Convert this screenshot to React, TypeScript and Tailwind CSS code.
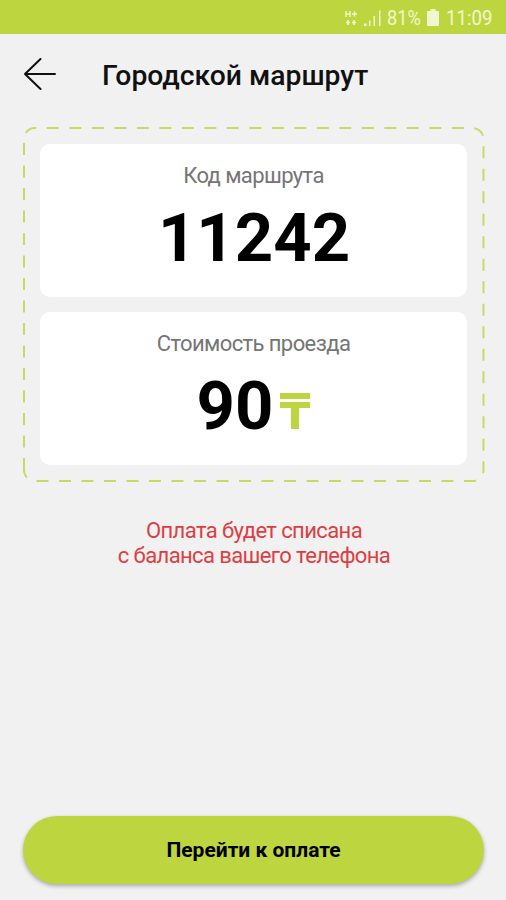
import type { ReactNode } from 'react';

/**
 * Android status bar with signal, battery and clock
 */
function StatusBar() {
  return (
    <div className="flex h-[34px] items-center justify-end bg-[#bdd63f] pt-[2px] pr-[15px] text-[#f1f6d0]">
      <svg className="mr-[7px] h-[18px] w-[14px]" viewBox="0 0 14 18" fill="none" stroke="currentColor" strokeWidth="1.5">
        <path d="M3 2v6M7 2v6M3 5h4M9 5h5M11.500 2.500v5" />
        <path d="M5 11v5M3 13.500h4M11 11v5M9 13.500h4" strokeWidth="1.6" />
      </svg>
      <svg className="mr-[6px] h-[18px] w-[17px]" viewBox="0 0 17 18" fill="currentColor">
        <path d="M0 14.500h2.500V17H0zM5 11.500h1.500V17H5zM9.500 7h1.500v10h-1.500zM15 1.500h1.500V17H15z" />
      </svg>
      <span className="w-[34px] whitespace-nowrap text-[20.5px] leading-[32px]">
        <span className="inline-block origin-left scale-x-[0.89]">81%</span>
      </span>
      <svg className="mr-[7px] ml-[6px] h-[18px] w-[12px]" viewBox="0 0 12 18" fill="currentColor">
        <path d="M3.500 0h5v2H11a1 1 0 0 1 1 1V16a1 1 0 0 1-1 1H1a1 1 0 0 1-1-1V3a1 1 0 0 1 1-1h2.500z" />
      </svg>
      <span className="w-[45px] whitespace-nowrap text-[20.5px] leading-[32px]">
        <span className="inline-block origin-left scale-x-[0.91]">11:09</span>
      </span>
    </div>
  );
}

/**
 * White card with a caption and a large value
 */
function InfoCard({ label, children }: { label: string; children: ReactNode }) {
  return (
    <section className="h-[153px] rounded-[10px] bg-white pt-[18px] text-center">
      <p className="text-[22px] leading-[28px] tracking-[-0.6px] text-[#757575]">{label}</p>
      <div className="mt-[12px] flex items-baseline justify-center pl-px text-[67px] leading-[72px] font-bold text-black">
        {children}
      </div>
    </section>
  );
}

function TengeIcon() {
  return (
    <svg className="mr-px ml-[7px] h-[36px] w-[30px]" viewBox="0 0 30 36" fill="#bdd63f">
      <path d="M0 0h30v6H0zM0 9h30v6H19v21h-8V15H0z" />
    </svg>
  );
}

export default function App() {
  return (
    <div className="flex h-[900px] w-[506px] flex-col overflow-hidden bg-[#f1f1f1] font-['Roboto',sans-serif]">
      <StatusBar />

      <header className="flex h-[82px] items-center pl-[23px]">
        <svg className="h-[34px] w-[34px]" viewBox="0 0 34 34" fill="none" stroke="#111" strokeWidth="2" strokeLinecap="round" strokeLinejoin="round">
          <path d="M32 16H2M17.500 1L2 16l15.500 15" />
        </svg>
        <h1 className="ml-[45px] pt-[2px] text-[28.3px] leading-[32px] font-medium text-[#111]">Городской маршрут</h1>
      </header>

      <main className="relative mr-[21px] ml-[22px] mt-[10px] h-[357px] px-[18px] pt-[18px]">
        <svg className="absolute inset-0 h-[357px] w-[463px]" viewBox="0 0 463 357" fill="none" stroke="#c6db64" strokeWidth="2">
          <path d="M2 344V13A11 11 0 0 1 13 2H450.500A11 11 0 0 1 461.500 13V344A11 11 0 0 1 450.500 355H13A11 11 0 0 1 2 344" strokeDasharray="12 10.5" />
        </svg>
        <div className="flex flex-col gap-[15px]">
          <InfoCard label="Код маршрута">11242</InfoCard>
          <InfoCard label="Стоимость проезда">
            <span>90</span>
            <TengeIcon />
          </InfoCard>
        </div>
      </main>

      <p className="mt-[35px] pl-[2px] text-center text-[22px] leading-[25px] tracking-[-0.6px] text-[#dc3f43]">
        Оплата будет списана
        <br />
        с баланса вашего телефона
      </p>

      <button className="mr-[22px] ml-[23px] mt-auto mb-[16px] h-[68px] shrink-0 rounded-full bg-[#bdd63f] pt-[2px] text-[21px] font-bold text-black shadow-[0_2px_4px_rgba(0,0,0,0.3)]">
        Перейти к оплате
      </button>
    </div>
  );
}
